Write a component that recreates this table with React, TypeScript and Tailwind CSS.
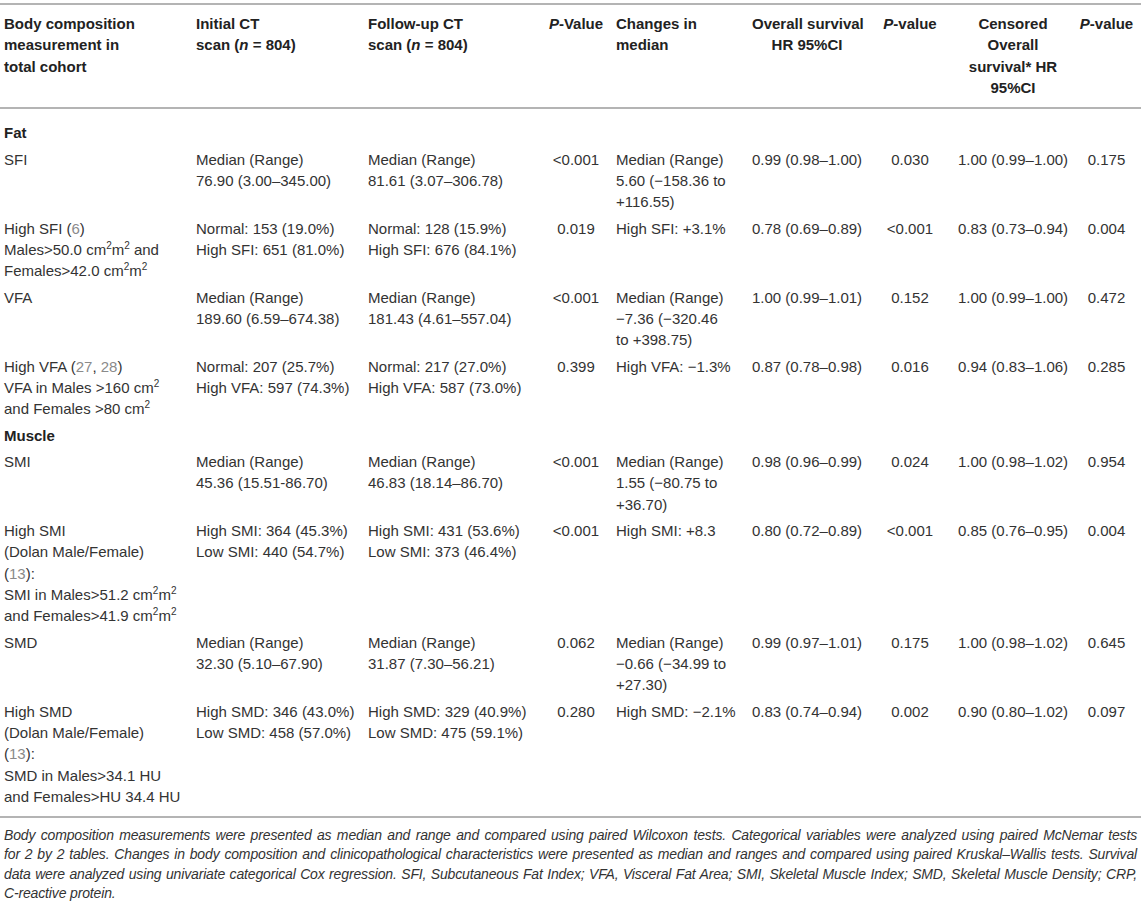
import type { ReactNode } from 'react';

const Sup = ({ children }: { children: ReactNode }) => (
  <span className="relative -top-[6px] text-[10px] leading-none">{children}</span>
);

const Ref = ({ children }: { children: ReactNode }) => <span className="text-[#8a8a8a]">{children}</span>;

const cm2m2 = (
  <>
    cm<Sup>2</Sup>m<Sup>2</Sup>
  </>
);

type Row = {
  cells: ReactNode[];
};

const rows: Row[] = [
  {
    cells: [
      'SFI',
      <>Median (Range)<br />76.90 (3.00–345.00)</>,
      <>Median (Range)<br />81.61 (3.07–306.78)</>,
      '<0.001',
      <>Median (Range)<br />5.60 (−158.36 to<br />+116.55)</>,
      '0.99 (0.98–1.00)',
      '0.030',
      '1.00 (0.99–1.00)',
      '0.175',
    ],
  },
  {
    cells: [
      <>High SFI (<Ref>6</Ref>)<br />Males&gt;50.0 {cm2m2} and<br />Females&gt;42.0 {cm2m2}</>,
      <>Normal: 153 (19.0%)<br />High SFI: 651 (81.0%)</>,
      <>Normal: 128 (15.9%)<br />High SFI: 676 (84.1%)</>,
      '0.019',
      'High SFI: +3.1%',
      '0.78 (0.69–0.89)',
      '<0.001',
      '0.83 (0.73–0.94)',
      '0.004',
    ],
  },
  {
    cells: [
      'VFA',
      <>Median (Range)<br />189.60 (6.59–674.38)</>,
      <>Median (Range)<br />181.43 (4.61–557.04)</>,
      '<0.001',
      <>Median (Range)<br />−7.36 (−320.46<br />to +398.75)</>,
      '1.00 (0.99–1.01)',
      '0.152',
      '1.00 (0.99–1.00)',
      '0.472',
    ],
  },
  {
    cells: [
      <>High VFA (<Ref>27</Ref>, <Ref>28</Ref>)<br />VFA in Males &gt;160 cm<Sup>2</Sup><br />and Females &gt;80 cm<Sup>2</Sup></>,
      <>Normal: 207 (25.7%)<br />High VFA: 597 (74.3%)</>,
      <>Normal: 217 (27.0%)<br />High VFA: 587 (73.0%)</>,
      '0.399',
      'High VFA: −1.3%',
      '0.87 (0.78–0.98)',
      '0.016',
      '0.94 (0.83–1.06)',
      '0.285',
    ],
  },
];

const muscleRows: Row[] = [
  {
    cells: [
      'SMI',
      <>Median (Range)<br />45.36 (15.51-86.70)</>,
      <>Median (Range)<br />46.83 (18.14–86.70)</>,
      '<0.001',
      <>Median (Range)<br />1.55 (−80.75 to<br />+36.70)</>,
      '0.98 (0.96–0.99)',
      '0.024',
      '1.00 (0.98–1.02)',
      '0.954',
    ],
  },
  {
    cells: [
      <>High SMI<br />(Dolan Male/Female)<br />(<Ref>13</Ref>):<br />SMI in Males&gt;51.2 {cm2m2}<br />and Females&gt;41.9 {cm2m2}</>,
      <>High SMI: 364 (45.3%)<br />Low SMI: 440 (54.7%)</>,
      <>High SMI: 431 (53.6%)<br />Low SMI: 373 (46.4%)</>,
      '<0.001',
      'High SMI: +8.3',
      '0.80 (0.72–0.89)',
      '<0.001',
      '0.85 (0.76–0.95)',
      '0.004',
    ],
  },
  {
    cells: [
      'SMD',
      <>Median (Range)<br />32.30 (5.10–67.90)</>,
      <>Median (Range)<br />31.87 (7.30–56.21)</>,
      '0.062',
      <>Median (Range)<br />−0.66 (−34.99 to<br />+27.30)</>,
      '0.99 (0.97–1.01)',
      '0.175',
      '1.00 (0.98–1.02)',
      '0.645',
    ],
  },
  {
    cells: [
      <>High SMD<br />(Dolan Male/Female)<br />(<Ref>13</Ref>):<br />SMD in Males&gt;34.1 HU<br />and Females&gt;HU 34.4 HU</>,
      <>High SMD: 346 (43.0%)<br />Low SMD: 458 (57.0%)</>,
      <>High SMD: 329 (40.9%)<br />Low SMD: 475 (59.1%)</>,
      '0.280',
      'High SMD: −2.1%',
      '0.83 (0.74–0.94)',
      '0.002',
      '0.90 (0.80–1.02)',
      '0.097',
    ],
  },
];

// alignment per column: left for labels, centre for the numbers
const align = ['text-left', 'text-left', 'text-left', 'text-center', 'text-left', 'text-center', 'text-center', 'text-center', 'text-center'];

const BodyRow = ({ row }: { row: Row }) => (
  <tr>
    {row.cells.map((c, i) => (
      <td key={i} className={`px-1 py-[2.5px] align-top whitespace-nowrap ${align[i]}`}>
        {c}
      </td>
    ))}
  </tr>
);

const SectionRow = ({ label, first }: { label: string; first?: boolean }) => (
  <tr>
    <td colSpan={9} className={`px-1 ${first ? 'pt-[13px]' : 'pt-[2.5px]'} pb-[2.5px] font-bold text-[#222]`}>
      {label}
    </td>
  </tr>
);

const footLines = [
  'Body composition measurements were presented as median and range and compared using paired Wilcoxon tests. Categorical variables were analyzed using paired McNemar tests',
  'for 2 by 2 tables. Changes in body composition and clinicopathological characteristics were presented as median and ranges and compared using paired Kruskal–Wallis tests. Survival',
  'data were analyzed using univariate categorical Cox regression. SFI, Subcutaneous Fat Index; VFA, Visceral Fat Area; SMI, Skeletal Muscle Index; SMD, Skeletal Muscle Density; CRP,',
];

export default function App() {
  return (
    <div className="w-[1145px] h-[906px] overflow-hidden bg-white pt-[3px] font-['Liberation_Sans',Arial,sans-serif] text-[15px] leading-[21.33px] text-[#333]">
      <table className="w-[1141px] table-fixed border-collapse">
        <colgroup>
          <col className="w-[192px]" />
          <col className="w-[172px]" />
          <col className="w-[176px]" />
          <col className="w-[72px]" />
          <col className="w-[136px]" />
          <col className="w-[118px]" />
          <col className="w-[88px]" />
          <col className="w-[118px]" />
          <col className="w-[69px]" />
        </colgroup>
        <thead>
          <tr className="border-y-2 border-[#b4b4b4] align-top font-bold text-[#222]">
            <th className="px-1 pt-[8px] pb-[9px] text-left font-bold">
              Body composition<br />measurement in<br />total cohort
            </th>
            <th className="px-1 pt-[8px] text-left font-bold">
              Initial CT<br />scan (<i>n</i> = 804)
            </th>
            <th className="px-1 pt-[8px] text-left font-bold">
              Follow-up CT<br />scan (<i>n</i> = 804)
            </th>
            <th className="px-1 pt-[8px] text-center font-bold whitespace-nowrap">
              <i>P</i>-Value
            </th>
            <th className="px-1 pt-[8px] text-left font-bold">
              Changes in<br />median
            </th>
            <th className="px-1 pt-[8px] text-center font-bold whitespace-nowrap">
              Overall survival<br />HR 95%CI
            </th>
            <th className="px-1 pt-[8px] text-center font-bold">
              <i>P</i>-value
            </th>
            <th className="px-1 pt-[8px] pb-[9px] text-center font-bold">
              Censored<br />Overall<br />survival* HR<br />95%CI
            </th>
            <th className="px-1 pt-[8px] text-center font-bold">
              <i>P</i>-value
            </th>
          </tr>
        </thead>
        <tbody>
          <SectionRow label="Fat" first />
          {rows.map((r, i) => (
            <BodyRow key={i} row={r} />
          ))}
          <SectionRow label="Muscle" />
          {muscleRows.map((r, i) => (
            <BodyRow key={i} row={r} />
          ))}
          <tr>
            <td colSpan={9} className="h-[6px]" />
          </tr>
        </tbody>
      </table>

      {/* footnote */}
      <div className="w-[1141px] border-t-2 border-[#b4b4b4] px-1 pt-[8px] italic text-[14px] leading-[19.5px] tracking-[-0.15px]">
        {footLines.map((l, i) => (
          <p key={i} className="whitespace-nowrap text-justify [text-align-last:justify]">
            {l}
          </p>
        ))}
        <p>C-reactive protein.</p>
      </div>
    </div>
  );
}
